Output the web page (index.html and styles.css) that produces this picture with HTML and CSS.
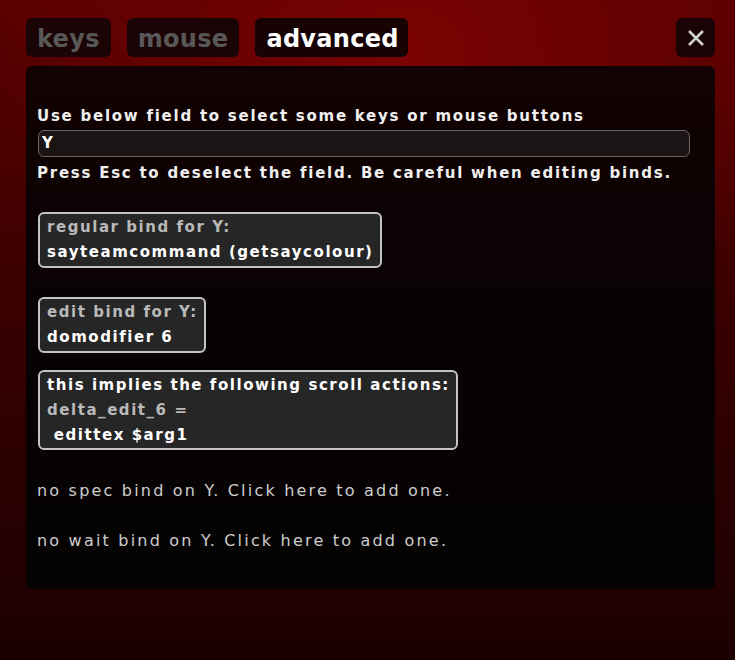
FILE: index.html
```html
<!DOCTYPE html>
<html>
<head>
<meta charset="utf-8">
<link rel="stylesheet" href="styles.css">
</head>
<body>
<div class="screen">
  <div class="tabbar">
    <div class="tab">keys</div>
    <div class="tab">mouse</div>
    <div class="tab active">advanced</div>
    <div class="spacer"></div>
    <div class="close">
      <svg width="18" height="18" viewBox="0 0 18 18"><path d="M2 2 L16 16 M16 2 L2 16" stroke="#d2d2d2" stroke-width="2.6" stroke-linecap="butt"/></svg>
    </div>
  </div>
  <div class="panel">
    <div class="line">Use below field to select some keys or mouse buttons</div>
    <div class="field">Y</div>
    <div class="line">Press Esc to deselect the field. Be careful when editing binds.</div>
    <div class="box b1">
      <div class="dim">regular bind for Y:</div>
      <div>sayteamcommand (getsaycolour)</div>
    </div>
    <div class="box b2">
      <div class="dim">edit bind for Y:</div>
      <div>domodifier 6</div>
    </div>
    <div class="box b3">
      <div>this implies the following scroll actions:</div>
      <div class="dim">delta_edit_6 =</div>
      <div class="pre"> edittex $arg1</div>
    </div>
    <div class="note n1">no spec bind on Y. Click here to add one.</div>
    <div class="note n2">no wait bind on Y. Click here to add one.</div>
  </div>
</div>
</body>
</html>
```
FILE: styles.css
```css
html, body {
  margin: 0;
  padding: 0;
  height: 100%;
}
body {
  background:
    radial-gradient(ellipse 70% 60% at 55% 8%, #7c0303 0%, #6a0101 35%, rgba(90,0,0,0) 80%),
    linear-gradient(to bottom, #5a0000 0%, #3a0000 45%, #1c0001 100%);
  font-family: "DejaVu Sans", "Liberation Sans", sans-serif;
  color: #f2f2f2;
  overflow: hidden;
}
.screen {
  padding: 18px 20px 0 26px;
  display: flex;
  flex-direction: column;
  gap: 9px;
}
.tabbar {
  display: flex;
  align-items: stretch;
  gap: 16px;
  height: 39px;
}
.tab {
  background: #1b0406;
  border-radius: 6px;
  padding: 2px 11px 0 11px;
  font-size: 24px;
  font-weight: bold;
  color: #585858;
  line-height: 39px;
  height: 39px;
  box-sizing: border-box;
  letter-spacing: 0.3px;
}
.tab.active {
  color: #ffffff;
  background: #170304;
  padding-right: 9px;
}
.spacer { flex: 1; }
.close {
  width: 39px;
  background: #1a0304;
  border-radius: 6px;
  display: flex;
  align-items: center;
  justify-content: center;
}
.panel {
  background: linear-gradient(to bottom, #120203 0%, #080203 50%, #050303 100%);
  border-radius: 6px;
  height: 523px;
  padding: 38px 11px 0 11px;
  box-sizing: border-box;
  font-size: 15px;
  font-weight: bold;
  letter-spacing: 1.75px;
  line-height: 25px;
}
.line { color: #f0f0f0; }
.field {
  margin: 1px 14px 4px 1px;
  height: 27px;
  box-sizing: border-box;
  border: 1px solid #6a6464;
  border-radius: 6px;
  background: #1a1414;
  padding-left: 3px;
  line-height: 25px;
  color: #fff;
}
.box {
  display: table;
  margin-left: 1px;
  background: #262626;
  border: 2px solid #c4c4c4;
  border-radius: 6px;
  padding: 1px 6px 1px 7px;
  color: #ffffff;
  white-space: pre;
  letter-spacing: 1.55px;
}
.box .dim { color: #b9b9b9; }
.b1 { margin-top: 26px; }
.b2 { margin-top: 29px; }
.b3 { margin-top: 17px; padding-top: 1px; padding-bottom: 0; }
.note {
  font-weight: normal;
  font-size: 16px;
  color: #cdcdcd;
  letter-spacing: 2.2px;
}
.n1 { margin-top: 28px; }
.n2 { margin-top: 25px; }
```
